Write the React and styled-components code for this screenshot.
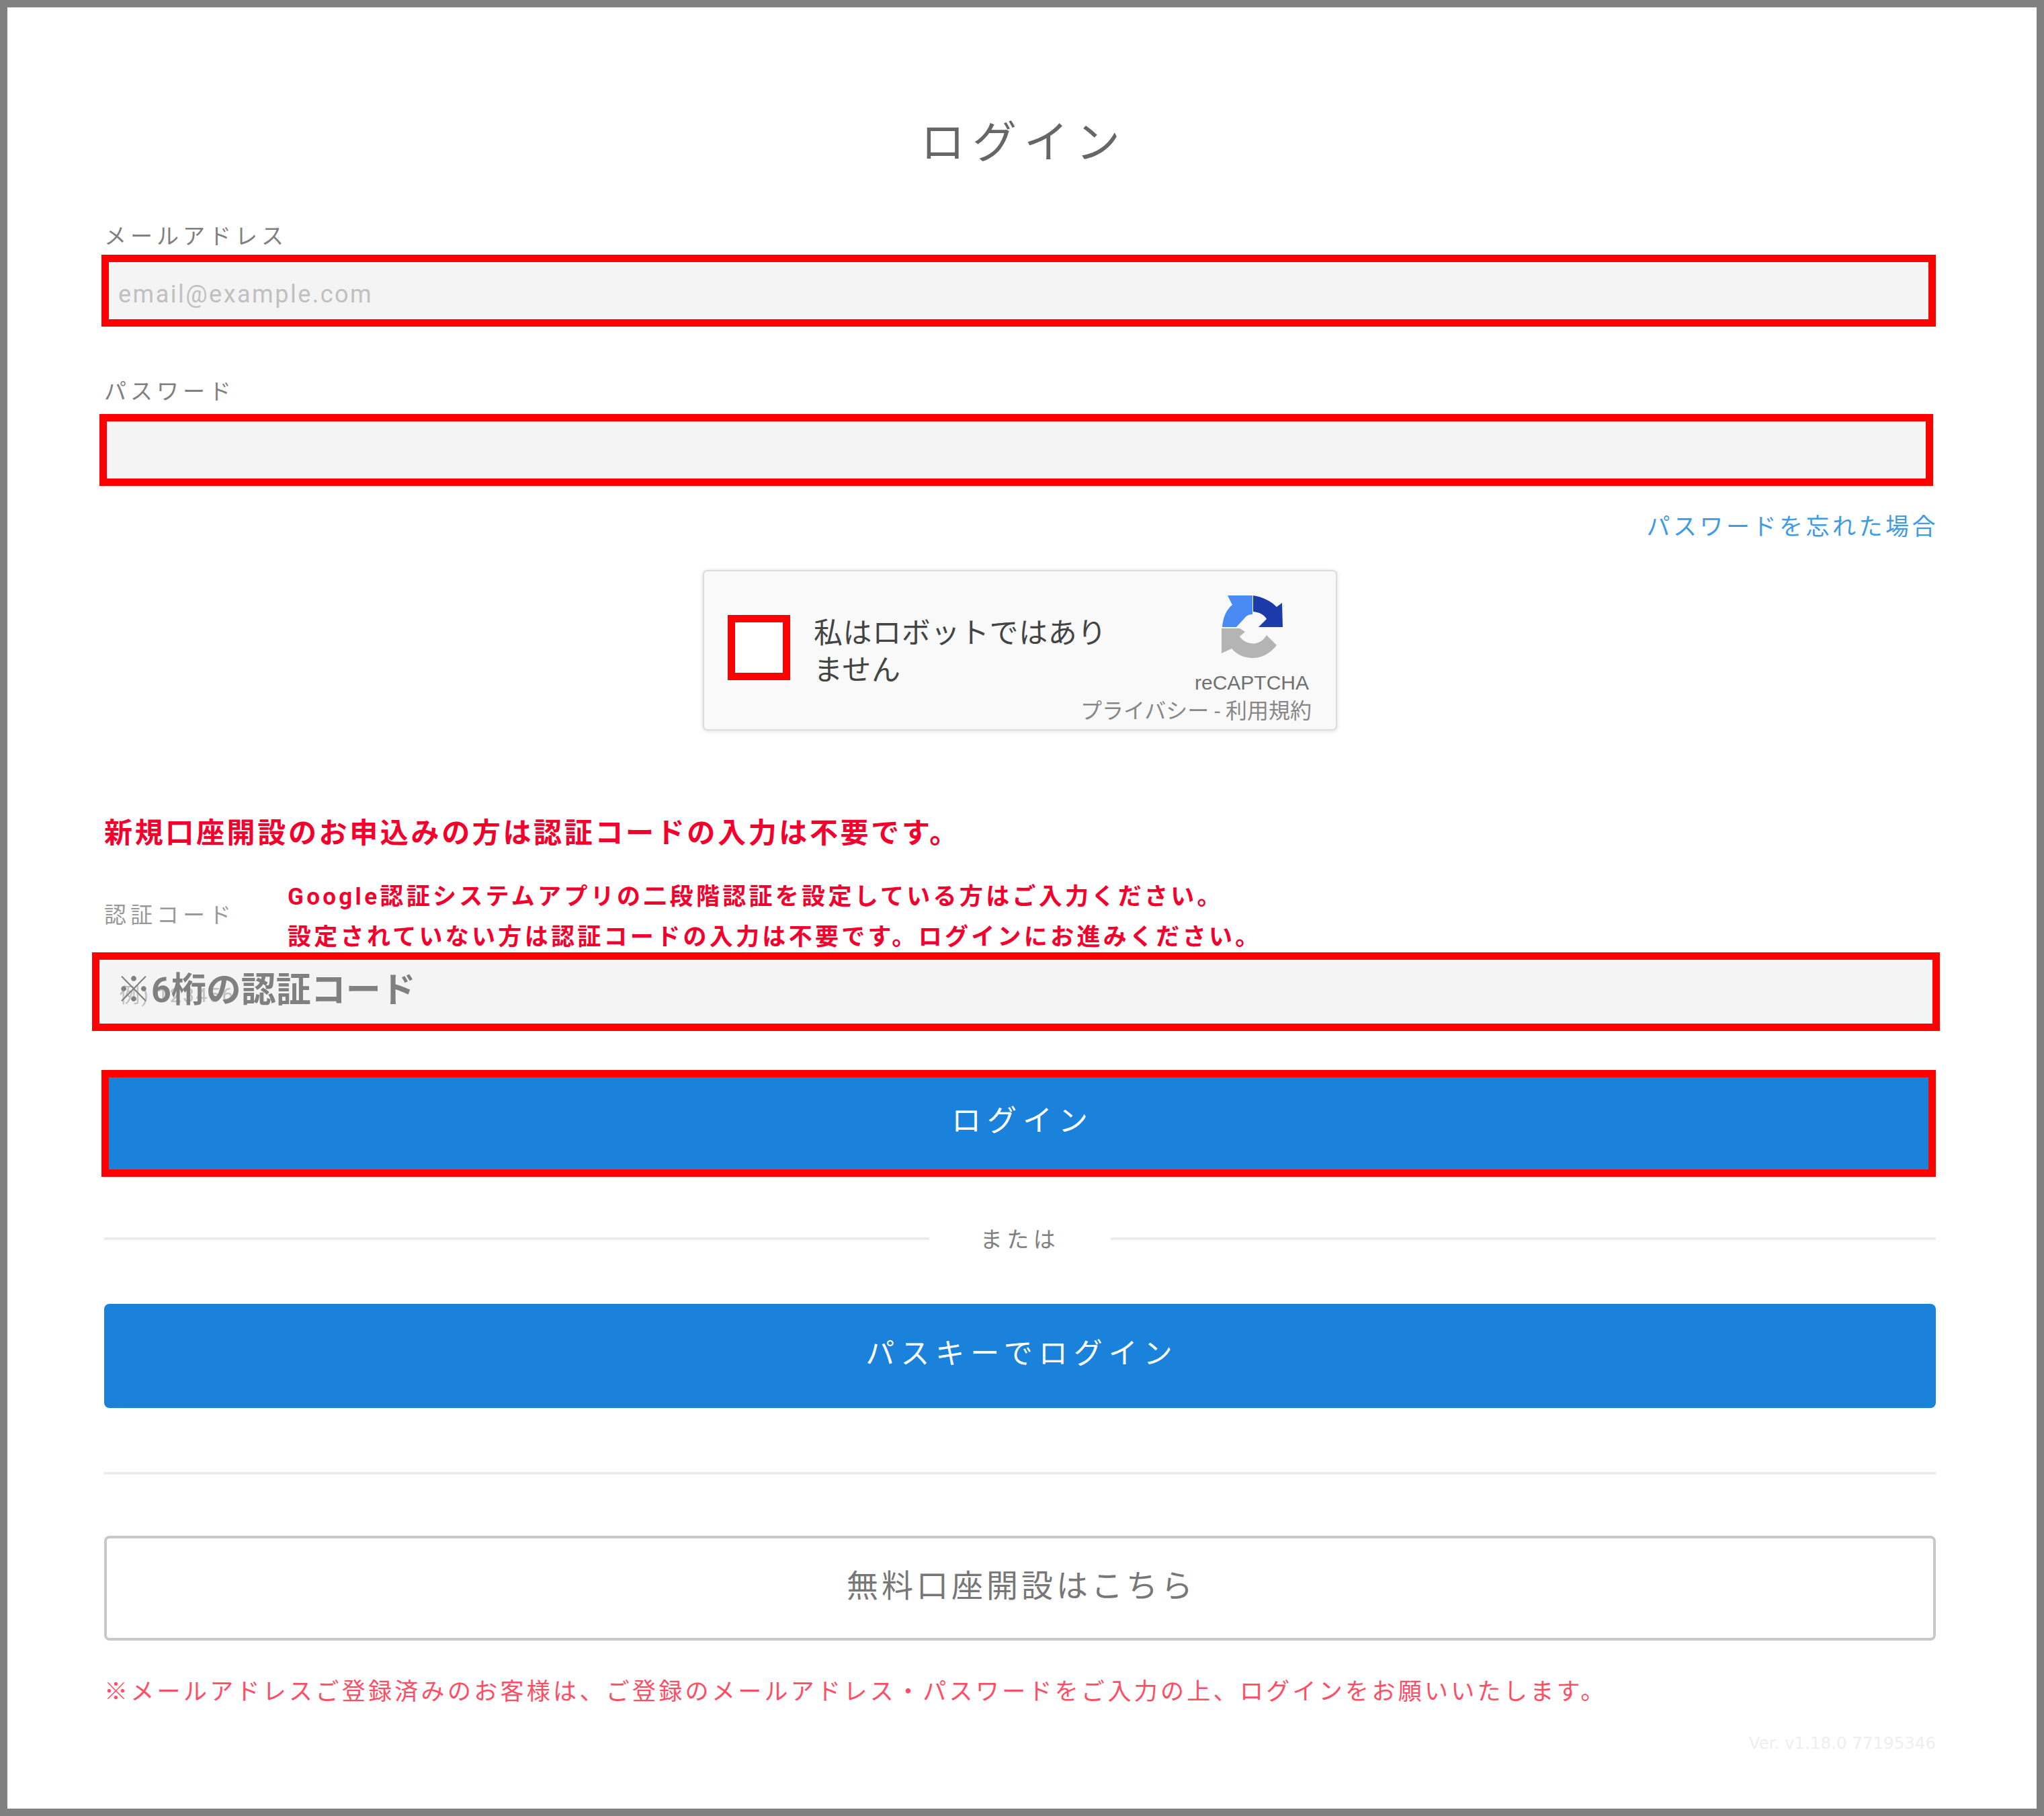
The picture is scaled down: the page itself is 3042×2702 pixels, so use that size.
import styled, { createGlobalStyle } from "styled-components";

const GlobalStyle = createGlobalStyle`
  html, body {
    margin: 0;
    padding: 0;
    background: #fff;
  }
  * {
    box-sizing: border-box;
  }
`;

const FONT = `Roboto, "Noto Sans CJK JP", sans-serif`;

const Frame = styled.div`
  width: 3042px;
  height: 2702px;
  border: 11px solid #808080;
  background: #fff;
  padding: 159px 150px 0 144px;
  font-family: ${FONT};
  display: flex;
  flex-direction: column;
  overflow: hidden;
`;

const Title = styled.h1`
  margin: 0;
  height: 80px;
  padding: 3px 0 0 12px;
  line-height: 80px;
  font-size: 66px;
  font-weight: 400;
  letter-spacing: 11px;
  color: #666;
  text-align: center;
`;

const Label = styled.label`
  display: block;
  margin-top: ${(p) => p.$top}px;
  height: 40px;
  line-height: 40px;
  font-size: 33px;
  letter-spacing: 6px;
  color: #808080;
`;

const Field = styled.div`
  position: relative;
  height: ${(p) => p.$height}px;
  margin-top: ${(p) => p.$top}px;
  margin-left: ${(p) => -p.$left}px;
  margin-right: ${(p) => -p.$right}px;
  border: 11px solid #f00;
  background: #f4f4f4;
`;

const Input = styled.input`
  display: block;
  width: 100%;
  height: 100%;
  border: none;
  outline: none;
  background: transparent;
  padding: 10px 0 0 ${(p) => p.$pad}px;
  font-family: ${FONT};
  font-size: 36px;
  letter-spacing: 2.5px;
  color: #666;
  &::placeholder {
    color: #c0c0c0;
    opacity: 1;
  }
`;

const CodeInput = styled(Input)`
  font-size: 30px;
`;

const CodeHint = styled.span`
  position: absolute;
  left: 25px;
  top: 12px;
  line-height: 68px;
  font-size: 52px;
  font-weight: 700;
  color: #808080;
  white-space: nowrap;
`;

const Forgot = styled.a`
  margin-top: 40px;
  align-self: flex-end;
  height: 40px;
  padding-top: 2px;
  line-height: 40px;
  font-size: 35px;
  letter-spacing: 4.5px;
  margin-right: -4px;
  color: #3f9be3;
`;

const Captcha = styled.div`
  margin: 45px auto 0;
  width: 944px;
  height: 239px;
  display: flex;
  align-items: flex-start;
  background: #f9f9f9;
  border: 2px solid #dcdcdc;
  border-radius: 7px;
  box-shadow: 0 1px 5px 1px rgba(0, 0, 0, 0.1);
`;

const CheckBox = styled.span`
  flex: none;
  width: 93px;
  height: 97px;
  margin: 65px 0 0 35px;
  border: 11px solid #f00;
  background: #fff;
`;

const CaptchaText = styled.div`
  flex: none;
  width: 440px;
  margin: 65px 0 0 35px;
  font-size: 43px;
  line-height: 55px;
  letter-spacing: 0.6px;
  color: #444;
`;

const CaptchaBrand = styled.div`
  flex: 1;
  min-width: 0;
  display: flex;
  flex-direction: column;
  align-items: flex-end;
  padding: 34px 36px 0 0;
  white-space: nowrap;
`;

const Logo = styled.svg`
  flex: none;
  width: 94px;
  height: 96px;
  margin-right: 42px;
`;

const BrandName = styled.div`
  margin: 20px 4px 0 0;
  font-family: "Liberation Sans", sans-serif;
  font-size: 30px;
  line-height: 32px;
  color: #707070;
`;

const BrandLinks = styled.div`
  margin-top: 8px;
  font-size: 32px;
  line-height: 36px;
  color: #888;
`;

const Notice = styled.p`
  margin: 128px 0 0;
  height: 50px;
  line-height: 50px;
  font-size: 42px;
  font-weight: 700;
  letter-spacing: 3.65px;
  color: #f4002c;
`;

const CodeRow = styled.div`
  margin-top: 36px;
  height: 116px;
  display: flex;
  align-items: center;
`;

const CodeLabel = styled.label`
  flex: none;
  width: 273px;
  font-size: 33px;
  letter-spacing: 6px;
  color: #999;
`;

const CodeNote = styled.div`
  margin-top: 12px;
  font-size: 35px;
  font-weight: 700;
  line-height: 60px;
  letter-spacing: 4.3px;
  color: #f4002c;
  white-space: nowrap;
`;

const PrimaryButton = styled.button`
  display: block;
  width: 100%;
  height: 155px;
  margin-top: 77px;
  padding: 0 0 16px 6px;
  border: none;
  border-radius: 8px;
  background: #1a82da;
  color: #fff;
  font-family: ${FONT};
  font-size: 43px;
  letter-spacing: 9px;
`;

const LoginButton = styled(PrimaryButton)`
  width: auto;
  height: 159px;
  margin: 58px 0 0 -4px;
  padding-left: 12px;
  border: 11px solid #f00;
  border-radius: 0;
  font-size: 44px;
`;

const Or = styled.div`
  margin-top: 72px;
  height: 40px;
  display: flex;
  align-items: center;
  gap: 76px;
  &::before,
  &::after {
    content: "";
    flex: 1;
    height: 4px;
    background: #ebebeb;
  }
`;

const OrText = styled.span`
  margin-top: -3px;
  font-size: 33px;
  letter-spacing: 6.5px;
  color: #808080;
`;

const Rule = styled.hr`
  margin: 95px 0 0;
  height: 4px;
  border: none;
  background: #ebebeb;
`;

const OutlineButton = styled.button`
  display: block;
  width: 100%;
  height: 156px;
  margin-top: 91px;
  padding: 0 0 16px 4px;
  border: 4px solid #c8c8c8;
  border-radius: 8px;
  background: #fff;
  color: #777;
  font-family: ${FONT};
  font-size: 47px;
  letter-spacing: 5px;
`;

const Note = styled.p`
  margin: 52px 0 0;
  height: 50px;
  line-height: 50px;
  font-size: 35px;
  letter-spacing: 4.3px;
  color: #ff4d66;
  white-space: nowrap;
`;

const Version = styled.div`
  margin-top: 36px;
  height: 30px;
  line-height: 30px;
  text-align: right;
  font-family: "DejaVu Sans", sans-serif;
  font-size: 24.5px;
  color: #eee;
`;

// reCAPTCHA mark: three arrow segments
const RecaptchaMark = () => (
  <Logo viewBox="26 14 94 96">
    <path d="M37 16 L74 16 L74 44 C68 44 64 47 62 50 L50 63 L29 63 C30 49 35 37 44 30 Z" fill="#4a8af4" />
    <path d="M75 16 C89 18 101 24 110 33 L118 27 L119 63 L83 63 L95 51 C91 44 84 41 75 40 Z" fill="#1c3aa9" />
    <path d="M28 65 L55 65 L63 70 L55 77 C60 85 71 89 80 87 C87 85 92 80 95 75 L110 90 C101 102 88 109 74 109 C62 109 51 104 43 95 L28 102 Z" fill="#b4b4b4" />
  </Logo>
);

export default function App() {
  return (
    <>
      <GlobalStyle />
      <Frame>
        <Title>ログイン</Title>

        <Label $top={82}>メールアドレス</Label>
        <Field $top={7} $height={107} $left={4} $right={0}>
          <Input $pad={14} placeholder="email@example.com" />
        </Field>

        <Label $top={77}>パスワード</Label>
        <Field $top={13} $height={107} $left={7} $right={-4}>
          <Input $pad={14} type="password" />
        </Field>

        <Forgot>パスワードを忘れた場合</Forgot>

        <Captcha>
          <CheckBox />
          <CaptchaText>私はロボットではありません</CaptchaText>
          <CaptchaBrand>
            <RecaptchaMark />
            <BrandName>reCAPTCHA</BrandName>
            <BrandLinks>プライバシー - 利用規約</BrandLinks>
          </CaptchaBrand>
        </Captcha>

        <Notice>新規口座開設のお申込みの方は認証コードの入力は不要です。</Notice>

        <CodeRow>
          <CodeLabel>認証コード</CodeLabel>
          <CodeNote>
            Google認証システムアプリの二段階認証を設定している方はご入力ください。
            <br />
            設定されていない方は認証コードの入力は不要です。ログインにお進みください。
          </CodeNote>
        </CodeRow>
        <Field $top={0} $height={117} $left={18} $right={6}>
          <CodeInput $pad={30} placeholder="例) 123456" />
          <CodeHint>※6桁の認証コード</CodeHint>
        </Field>

        <LoginButton>ログイン</LoginButton>

        <Or>
          <OrText>または</OrText>
        </Or>

        <PrimaryButton>パスキーでログイン</PrimaryButton>

        <Rule />

        <OutlineButton>無料口座開設はこちら</OutlineButton>

        <Note>
          ※メールアドレスご登録済みのお客様は、ご登録のメールアドレス・パスワードをご入力の上、ログインをお願いいたします。
        </Note>

        <Version>Ver. v1.18.0 77195346</Version>
      </Frame>
    </>
  );
}
